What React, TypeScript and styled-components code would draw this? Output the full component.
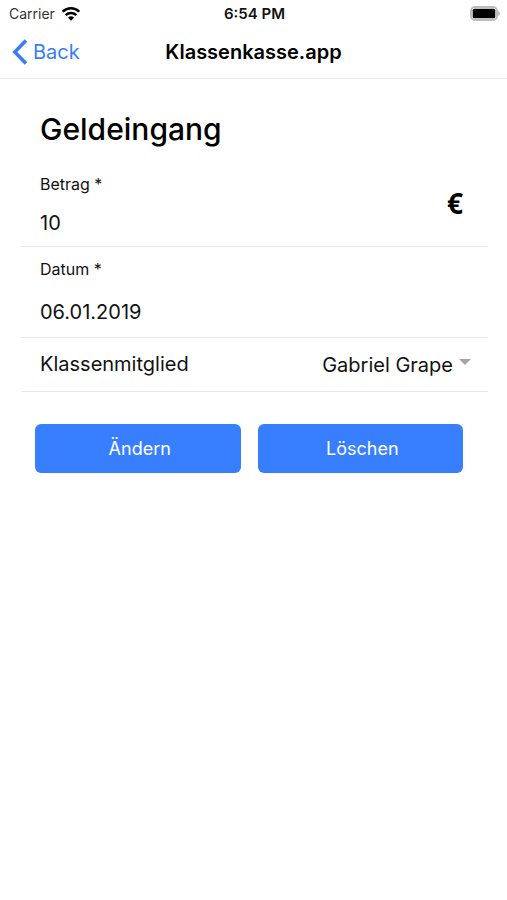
import React from "react";
import styled, { createGlobalStyle } from "styled-components";

const GlobalStyle = createGlobalStyle`
  *, *::before, *::after { box-sizing: border-box; }
  body { margin: 0; background: #fff; color: #111; font-family: Inter, "Liberation Sans", sans-serif; }
  button, input, select { font: inherit; color: inherit; }
`;

const StatusBar = styled.div`
  display: grid;
  grid-template-columns: 1fr auto 1fr;
  align-items: center;
  height: 27px;
  padding: 0 7px 0 9px;
  font-size: 14px;
`;

const Carrier = styled.span`
  display: flex;
  align-items: center;
  gap: 7px;
  color: #333;
`;

const Clock = styled.time`
  font-size: 15px;
  font-weight: 600;
`;

const BatterySlot = styled.span`
  display: flex;
  justify-content: flex-end;
`;

const NavBar = styled.header`
  display: grid;
  grid-template-columns: 1fr auto 1fr;
  align-items: center;
  height: 52px;
  padding: 0 12px 2px;
  border-bottom: 1px solid #ececec;
`;

const BackButton = styled.button`
  display: flex;
  align-items: center;
  gap: 5px;
  justify-self: start;
  padding: 0;
  border: 0;
  background: none;
  color: #387ef5;
  font-size: 20px;
`;

const NavTitle = styled.h1`
  margin: 0;
  font-size: 20px;
  font-weight: 600;
  color: #000;
`;

const Content = styled.main`
  padding: 30px 19px 0 21px;
`;

const Heading = styled.h2`
  margin: 0 0 15px;
  padding-left: 19px;
  font-size: 30px;
  line-height: 40px;
  font-weight: 500;
  color: #000;
`;

const Row = styled.div`
  display: flex;
  align-items: center;
  justify-content: space-between;
  padding: 0 17px 0 19px;
  border-bottom: 1px solid #e8e8e8;
`;

const Field = styled.div<{ $gap: number; $pad: number }>`
  flex: 1;
  min-width: 0;
  display: flex;
  flex-direction: column;
  gap: ${(p) => p.$gap}px;
  padding: ${(p) => p.$pad}px 0;
`;

const FieldLabel = styled.label`
  font-size: 16px;
  line-height: 24px;
`;

const TextInput = styled.input`
  width: 100%;
  height: 30px;
  padding: 0;
  border: 0;
  outline: 0;
  background: none;
  font-size: 20px;
`;

const Currency = styled.span`
  padding: 0 8px 4px 0;
  font-family: "Noto Sans", sans-serif;
  font-size: 28px;
  line-height: 40px;
  font-weight: 700;
  color: #000;
`;

const MemberLabel = styled.label`
  font-size: 20px;
  line-height: 53px;
`;

const SelectWrap = styled.div`
  display: flex;
  align-items: center;
  gap: 6px;
`;

const Select = styled.select`
  appearance: none;
  field-sizing: content;
  height: 30px;
  padding: 0;
  border: 0;
  outline: 0;
  background: none;
  font-size: 20px;
`;

const Caret = styled.svg`
  display: block;
  margin-bottom: 6px;
`;

const Actions = styled.div`
  display: grid;
  grid-template-columns: 1fr 1fr;
  gap: 17px;
  padding: 32px 25px 0 14px;
`;

const ActionButton = styled.button`
  height: 49px;
  padding: 0 0 0 4px;
  border: 0;
  border-radius: 6px;
  background: #387fff;
  color: #fff;
  font-size: 18px;
`;

function WifiIcon() {
  return (
    <svg width="18" height="14" viewBox="0 0 18 14" fill="none" stroke="#000" strokeWidth="2.4" aria-hidden="true">
      <path d="M.8 4.700a11.600 11.600 0 0 1 16.400 0" />
      <path d="M3.700 8.200a7.600 7.600 0 0 1 10.600 0" />
      <path d="M9 13.700 6 10.700a4.300 4.300 0 0 1 6 0z" fill="#000" stroke="none" />
    </svg>
  );
}

function BatteryIcon() {
  return (
    <svg width="30" height="15" viewBox="0 0 30 15" aria-hidden="true">
      <rect x="1" y="1" width="26" height="13" rx="4" fill="#fff" stroke="#bdbdbd" strokeWidth="2" />
      <rect x="2.7" y="2.7" width="22.6" height="9.6" rx="1.6" fill="#000" />
      <path d="M28 5v5c1.200-.5 2-1.400 2-2.500S29.200 5.500 28 5z" fill="#bdbdbd" />
    </svg>
  );
}

function BackIcon() {
  return (
    <svg width="16" height="26" viewBox="0 0 16 26" fill="none" stroke="#387ef5" strokeWidth="3.6" aria-hidden="true">
      <path d="M14 1.500 2.800 13 14 24.500" />
    </svg>
  );
}

export default function App() {
  return (
    <>
      <GlobalStyle />
      <StatusBar>
        <Carrier>
          Carrier
          <WifiIcon />
        </Carrier>
        <Clock>6:54 PM</Clock>
        <BatterySlot>
          <BatteryIcon />
        </BatterySlot>
      </StatusBar>
      <NavBar>
        <BackButton type="button">
          <BackIcon />
          Back
        </BackButton>
        <NavTitle>Klassenkasse.app</NavTitle>
      </NavBar>
      <Content>
        <Heading>Geldeingang</Heading>
        <Row>
          <Field $gap={12} $pad={8}>
            <FieldLabel htmlFor="amount">Betrag *</FieldLabel>
            <TextInput id="amount" inputMode="decimal" defaultValue="10" />
          </Field>
          <Currency>€</Currency>
        </Row>
        <Row>
          <Field $gap={16} $pad={10}>
            <FieldLabel htmlFor="date">Datum *</FieldLabel>
            <TextInput id="date" defaultValue="06.01.2019" />
          </Field>
        </Row>
        <Row>
          <MemberLabel htmlFor="member">Klassenmitglied</MemberLabel>
          <SelectWrap>
            <Select id="member" defaultValue="Gabriel Grape">
              <option>Gabriel Grape</option>
            </Select>
            <Caret width="12" height="6" viewBox="0 0 12 6" aria-hidden="true">
              <path d="M0 0h12L6 6z" fill="#a5a5a5" />
            </Caret>
          </SelectWrap>
        </Row>
        <Actions>
          <ActionButton type="button">Ändern</ActionButton>
          <ActionButton type="button">Löschen</ActionButton>
        </Actions>
      </Content>
    </>
  );
}
